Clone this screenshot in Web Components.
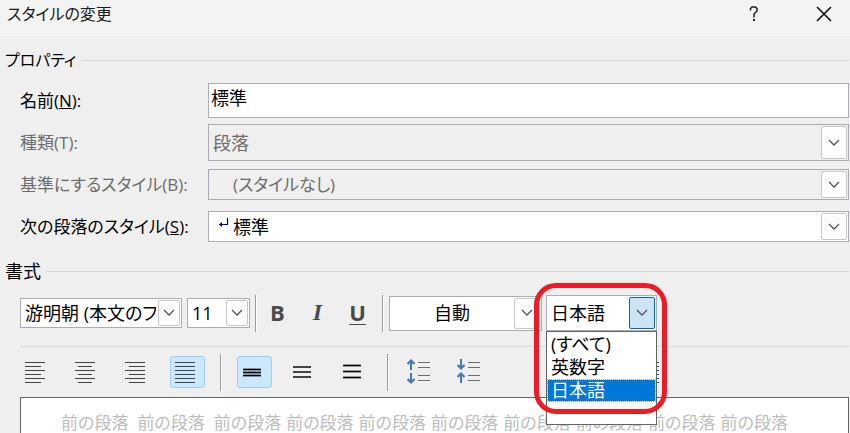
<!DOCTYPE html>
<html lang="ja">
<head>
<meta charset="utf-8">
<title>スタイルの変更</title>
<style>
  html, body { margin: 0; height: 100%; }
  body {
    background: #efefef;
    color: #000;
    font: 18px/24px "Open Sans", "Noto Sans CJK JP", sans-serif;
    font-feature-settings: "palt";
    overflow: hidden;
  }
</style>
</head>
<body>
<style-dialog></style-dialog>

<script>
// title bar with help and close
class TitleBar extends HTMLElement {
  constructor() {
    super()
    const root = this.attachShadow({ mode: "open" })
    root.innerHTML = `
      <style>
        :host { display: flex; align-items: center; height: 36px; padding: 0 8px 8px 7px; box-sizing: border-box; background: #f3f3f3; color: #1a1a1a; }
        h1 { flex: 1; margin: 0; font: inherit; font-size: 16px; }
        button { display: flex; justify-content: center; align-items: center; width: 36px; height: 28px; margin-left: 34px; padding: 0; border: 0; background: none; color: inherit; font: inherit; }
      </style>
      <h1><slot></slot></h1>
      <button aria-label="ヘルプ"><svg width="10" height="16" fill="none" stroke="#222" stroke-width="1.5"><path d="M1.5 4.5V2.5L3 1h3.5L8 2.500V5L5 8v3.500"/><path d="M4 14h2" stroke-width="2"/></svg></button>
      <button aria-label="閉じる"><svg width="16" height="16" stroke="#111" stroke-width="1.6"><path d="M1 1l14 14M15 1L1 15"/></svg></button>
    `
  }
}

// caption followed by a rule
class GroupTitle extends HTMLElement {
  constructor() {
    super()
    const root = this.attachShadow({ mode: "open" })
    root.innerHTML = `
      <style>
        :host { display: flex; align-items: center; gap: 5px; height: 24px; padding: 0 1px 0 5px; }
        h2 { margin: 0; font: inherit; }
        :host([small]) h2 { font-size: 16px; }
        i { flex: 1; height: 1px; background: #dadada; }
      </style>
      <h2><slot></slot></h2><i></i>
    `
  }
}

const labelCss = `
  label { color: var(--label-color, #000); font-size: 17px; white-space: nowrap; }
  label u { text-underline-offset: 2px; text-decoration-thickness: 1px; }
`

class TextField extends HTMLElement {
  constructor() {
    super()
    const root = this.attachShadow({ mode: "open" })
    root.innerHTML = `
      <style>
        :host { display: grid; grid-template-columns: 188px 1fr; align-items: center; }
        ${labelCss}
        input { box-sizing: border-box; width: 100%; min-width: 0; height: 35px; padding: 0 2px 7px; border: 1px solid #abadb3; border-radius: 0; background: #fff; color: #000; font: inherit; font-feature-settings: inherit; outline: 0; }
      </style>
      <label for="f"><slot></slot></label>
      <input id="f" type="text" value="${this.getAttribute("value")}">
    `
  }
}

// drop-down, with a label column when it has one
class ComboBox extends HTMLElement {
  constructor() {
    super()
    const root = this.attachShadow({ mode: "open" })
    const disabled = this.hasAttribute("disabled") ? "disabled" : ""
    const name = this.getAttribute("name")
    root.innerHTML = `
      <style>
        :host { display: grid; grid-template-columns: 188px 1fr; align-items: center; }
        :host([bare]) { display: block; flex: none; }
        :host([disabled]) { --label-color: #6d6d6d; }
        ${labelCss}
        .box { display: grid; grid-template-columns: 1fr auto; box-sizing: border-box; height: var(--h, 31px); border: 1px solid #abadb3; background: #fff; }
        :host([disabled]) .box { background: #efefef; }
        select { grid-area: 1 / 1 / 2 / 3; appearance: none; width: 100%; min-width: 0; height: 100%; margin: 0; padding: 0 25px 0 var(--indent, 4px); border: 0; border-radius: 0; background: none; color: #000; font: inherit; font-size: var(--size, 18px); font-feature-settings: inherit; outline: 0; text-overflow: clip; }
        select:disabled { color: #6d6d6d; opacity: 1; }
        .arrow { grid-area: 1 / 2; display: flex; align-items: center; justify-content: center; box-sizing: border-box; width: 26px; margin: 1px; border: 1px solid #c8c8cc; border-radius: 2px; background: #fdfdfd; pointer-events: none; }
        :host([small]) .arrow { width: 22px; }
        :host([open]) .arrow { border-color: #0067c0; background: #cce4f7; }
        .mark { grid-area: 1 / 1; margin: 5px 0 0 9px; pointer-events: none; }
      </style>
      ${name ? "" : `<label for="f"><slot></slot></label>`}
      <div class="box">
        <select id="f" ${disabled} ${name ? `aria-label="${name}"` : ""}><option>${this.getAttribute("value")}</option></select>
        ${this.hasAttribute("mark") ? `<svg class="mark" width="12" height="12" fill="none" stroke="#000080" stroke-width="1.2"><path d="M9.500 1v6.500H1.500"/><path d="M4 5v5L1 7.500z" fill="#000080" stroke="none"/></svg>` : ""}
        <span class="arrow"><svg width="12" height="8" fill="none" stroke="#555" stroke-width="1.300"><path d="M1 1l5 5 5-5"/></svg></span>
      </div>
    `
  }
}

const lines = (list, color, w = 1) =>
  list.map(([x1, x2, y]) => `<path d="M${x1} ${y}.5H${x2}" stroke="${color}" stroke-width="${w}"/>`).join("")
const rows = [0, 4, 8, 12, 16, 20]
const up = (x, y) => `<path d="M${x} ${y + 11}V${y + 2}" stroke-width="2"/><path d="M${x - 3.5} ${y + 5}l3.500-3.500 3.500 3.500" stroke-width="2.200"/>`
const down = (x, y) => `<path d="M${x} ${y}v9" stroke-width="2"/><path d="M${x - 3.5} ${y + 6}l3.500 3.500 3.500-3.500" stroke-width="2.200"/>`
const spacing = lines([[11, 23, 3], [11, 23, 8], [11, 23, 16], [11, 23, 21]], "#6b6b6b")

const icons = {
  left: [20, 21, lines(rows.map((y, i) => [0, i % 2 ? 16 : 20, y]), "#444")],
  center: [20, 21, lines(rows.map((y, i) => [i % 2 ? 3 : 0, i % 2 ? 17 : 20, y]), "#444")],
  right: [20, 21, lines(rows.map((y, i) => [i % 2 ? 4 : 0, 20, y]), "#444")],
  justify: [20, 21, lines(rows.map(y => [0, 20, y]), "#444")],
  single: [18, 9, `<path d="M0 0h18v9H0z" fill="#7f92a4"/>` + lines([[0, 18, 1], [0, 18, 4], [0, 18, 7]], "#000")],
  half: [18, 12, `<path d="M0 1h18M0 6h18M0 11h18" stroke="#444" stroke-width="2"/>`],
  double: [18, 16, lines([[0, 18, 1], [0, 18, 7], [0, 18, 13]], "#999", 3) + lines([[0, 18, 1], [0, 18, 7], [0, 18, 13]], "#000")],
  more: [24, 26, `<g fill="none" stroke="#427bb5">${up(4, 0)}${down(4, 14)}</g>` + spacing],
  less: [24, 26, `<g fill="none" stroke="#427bb5">${down(4, 0)}${up(4, 13)}</g>` + spacing],
  bold: `<b>B</b>`,
  italic: `<i>I</i>`,
  underline: `<b><u>U</u></b>`
}

class ToolButton extends HTMLElement {
  constructor() {
    super()
    const root = this.attachShadow({ mode: "open" })
    const icon = icons[this.getAttribute("icon")]
    root.innerHTML = `
      <style>
        :host { display: block; flex: none; }
        button { display: flex; align-items: center; justify-content: center; box-sizing: border-box; width: 35px; height: 32px; padding: 0 0 2px; border: 1px solid transparent; border-radius: 3px; background: none; color: #4a4a4a; font: 22px/28px "Open Sans", sans-serif; }
        .drawn { justify-content: flex-start; padding: 0 0 0 4px; }
        .narrow { padding-left: 5px; }
        :host([pressed]) button { border-color: #99d1ff; background: #cce8ff; }
        svg { display: block; flex: none; }
        i { font: italic bold 24px/28px "Liberation Serif", serif; }
        u { text-decoration-thickness: 1px; text-underline-offset: 3px; }
      </style>
      <button class="${Array.isArray(icon) ? "drawn" : ""} ${icon[0] === 18 ? "narrow" : ""}" aria-label="${this.getAttribute("name")}" aria-pressed="${this.hasAttribute("pressed")}">
        ${Array.isArray(icon) ? `<svg width="${icon[0]}" height="${icon[1]}" fill="none">${icon[2]}</svg>` : icon}
      </button>
    `
  }
}

class ToolSeparator extends HTMLElement {
  constructor() {
    super()
    this.attachShadow({ mode: "open" }).innerHTML = `
      <style>:host { display: block; flex: none; width: 1px; height: 37px; background: #9b9b9b; border-right: 1px solid #fff; }</style>
    `
  }
}

// language drop-down with its list pulled down
class LanguagePicker extends HTMLElement {
  constructor() {
    super()
    const root = this.attachShadow({ mode: "open" })
    root.innerHTML = `
      <style>
        :host { display: block; flex: none; position: relative; width: 111px; --h: 36px; }
        ul { position: absolute; z-index: 1; top: 36px; left: 0; right: 0; box-sizing: border-box; height: 94px; margin: 0; padding: 1px 0 0; border: 1px solid #646464; background: #fff; list-style: none; }
        li { box-sizing: border-box; height: 23px; padding: 0 3px; border: 1px dotted transparent; line-height: 21px; }
        li[aria-selected=true] { border-color: #ff8728; background: #0078d7 border-box; background-clip: padding-box; color: #fff; }
        .ring { position: absolute; z-index: 2; top: -12px; left: -12px; box-sizing: border-box; width: 133px; height: 131px; border: 5px solid #ed1c24; border-radius: 22px; pointer-events: none; }
      </style>
      <combo-box bare open name="文字種" value="日本語"></combo-box>
      <ul role="listbox" aria-label="文字種">
        <li role="option">(すべて)</li>
        <li role="option">英数字</li>
        <li role="option" aria-selected="true">日本語</li>
      </ul>
      <div class="ring"></div>
    `
  }
}

class StylePreview extends HTMLElement {
  constructor() {
    super()
    const root = this.attachShadow({ mode: "open" })
    root.innerHTML = `
      <style>
        :host { display: block; box-sizing: border-box; border: 1px solid #646464; border-bottom: 0; background: #fff; }
        p { display: flex; gap: 5px; margin: 0; padding: 16px 0 0 40px; color: #bdbdbd; font-size: 17px; line-height: 18px; white-space: nowrap; }
        .wide { padding-right: 4px; }
      </style>
      <p>${Array.from({ length: 10 }, (_, i) => `<span class="${i < 2 ? "wide" : ""}">前の段落</span>`).join("")}</p>
    `
  }
}

class StyleDialog extends HTMLElement {
  constructor() {
    super()
    const root = this.attachShadow({ mode: "open" })
    root.innerHTML = `
      <style>
        :host { display: flex; flex-direction: column; height: 100%; }
        .props { margin-top: 12px; }
        .fields { display: flex; flex-direction: column; padding: 11px 1px 17px 20px; }
        .type { --h: 37px; margin: 6px 0 8px; }
        .base { --indent: 24px; --size: 17px; margin-bottom: 11px; }
        .next { --indent: 24px; }
        .bar { display: flex; align-items: center; margin-left: 20px; margin-right: 1px; }
        .text { height: 60px; padding-bottom: 3px; border-bottom: 1px solid #dadada; }
        .text tool-button { margin-right: 5px; }
        .text tool-button:first-of-type { margin-left: 3px; }
        .text tool-button:last-of-type { margin-right: 7px; }
        .para { height: 50px; }
        .font { width: 162px; margin-right: 5px; }
        .size { width: 63px; margin-right: 5px; }
        .font, .size { --h: 30px; }
        .color { --h: 35px; --indent: 44px; width: 153px; margin: 0 4px 0 5px; }
        .para tool-button { margin-right: 15px; }
        .lead { margin-left: 15px; }
        .gap { margin-left: 13px; }
        .last { margin-left: 132px; }
        style-preview { flex: 1; margin: 0 1px 0 20px; }
      </style>
      <title-bar>スタイルの変更</title-bar>
      <group-title class="props" small>プロパティ</group-title>
      <div class="fields">
        <text-field value="標準">名前(<u>N</u>):</text-field>
        <combo-box class="type" disabled value="段落">種類(T):</combo-box>
        <combo-box class="base" disabled value="(スタイルなし)">基準にするスタイル(B):</combo-box>
        <combo-box class="next" mark value="標準">次の段落のスタイル(<u>S</u>):</combo-box>
      </div>
      <group-title>書式</group-title>
      <div class="bar text">
        <combo-box class="font" bare small name="フォント" value="游明朝 (本文のフォント)"></combo-box>
        <combo-box class="size" bare small name="サイズ" value="11"></combo-box>
        <tool-separator></tool-separator>
        <tool-button icon="bold" name="太字"></tool-button>
        <tool-button icon="italic" name="斜体"></tool-button>
        <tool-button icon="underline" name="下線"></tool-button>
        <tool-separator></tool-separator>
        <combo-box class="color" bare name="色" value="自動"></combo-box>
        <language-picker></language-picker>
      </div>
      <div class="bar para">
        <tool-button icon="left" name="左揃え"></tool-button>
        <tool-button icon="center" name="中央揃え"></tool-button>
        <tool-button icon="right" name="右揃え"></tool-button>
        <tool-button icon="justify" name="両端揃え" pressed></tool-button>
        <tool-separator></tool-separator>
        <tool-button class="lead" icon="single" name="1 行" pressed></tool-button>
        <tool-button icon="half" name="1.5 行"></tool-button>
        <tool-button icon="double" name="2 行"></tool-button>
        <tool-separator></tool-separator>
        <tool-button class="gap" icon="more" name="間隔を広げる"></tool-button>
        <tool-button icon="less" name="間隔を狭める"></tool-button>
        <tool-button class="last" icon="justify" name="インデント"></tool-button>
      </div>
      <style-preview></style-preview>
    `
  }
}

customElements.define("title-bar", TitleBar)
customElements.define("group-title", GroupTitle)
customElements.define("text-field", TextField)
customElements.define("combo-box", ComboBox)
customElements.define("tool-button", ToolButton)
customElements.define("tool-separator", ToolSeparator)
customElements.define("language-picker", LanguagePicker)
customElements.define("style-preview", StylePreview)
customElements.define("style-dialog", StyleDialog)
</script>
</body>
</html>
